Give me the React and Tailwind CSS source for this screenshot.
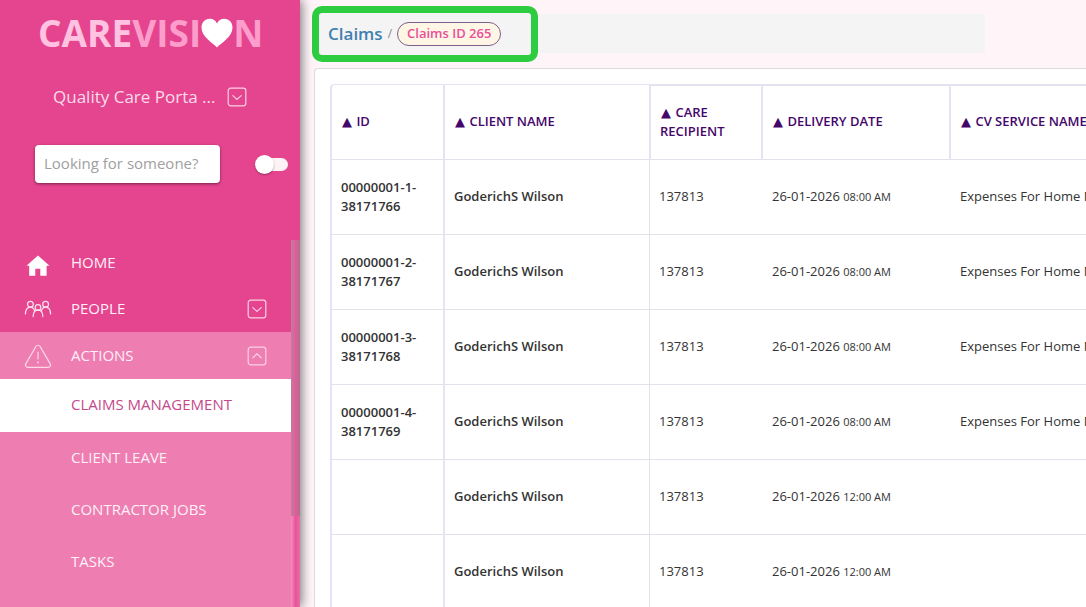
import React from "react";

const claims = [
  { id: ["00000001-1-", "38171766"], time: "08:00 AM", service: "Expenses For Home Maintenance" },
  { id: ["00000001-2-", "38171767"], time: "08:00 AM", service: "Expenses For Home Maintenance" },
  { id: ["00000001-3-", "38171768"], time: "08:00 AM", service: "Expenses For Home Maintenance" },
  { id: ["00000001-4-", "38171769"], time: "08:00 AM", service: "Expenses For Home Maintenance" },
  { id: [], time: "12:00 AM", service: "" },
  { id: [], time: "12:00 AM", service: "" },
];

const actions = ["CLIENT LEAVE", "CONTRACTOR JOBS", "TASKS"];

function BoxChevron({ up = false }) {
  return (
    <svg className="h-5 w-5 shrink-0" viewBox="0 0 20 20" fill="none" stroke="#fbd0e4" strokeLinecap="round" strokeLinejoin="round" aria-hidden="true">
      <rect x="1.2" y="1.2" width="17.6" height="17.6" rx="2.6" strokeWidth="1.2" />
      <path d={up ? "M5.8 11.8 10 7.8l4.2 4" : "M5.8 8.6 10 12.4l4.2-3.8"} strokeWidth="1.2" />
    </svg>
  );
}

function HomeIcon() {
  return (
    <svg className="h-7 w-7" viewBox="0 0 28 28" fill="#fff" aria-hidden="true">
      <path d="M14 6.500 25.500 16.800H22.600V26.700H16.300V19.700H11.300V26.700H5.200V16.800H2.500Z" />
    </svg>
  );
}

function PeopleIcon() {
  return (
    <svg className="h-7 w-7" viewBox="0 0 28 28" fill="none" stroke="#fde3ef" strokeWidth="1.200" strokeLinecap="round" aria-hidden="true">
      <circle cx="6.400" cy="9.200" r="2.900" />
      <circle cx="21.600" cy="9.200" r="2.900" />
      <circle cx="14" cy="12.400" r="2.800" />
      <path d="M1.400 19c0-4.200 2-6.900 5-6.900 2 0 3.400 1.300 4.100 3.600" />
      <path d="M26.600 19c0-4.200-2-6.900-5-6.900-2 0-3.400 1.300-4.100 3.600" />
      <path d="M9.100 21.600c.1-3.900 2-6.400 4.900-6.400s4.800 2.500 4.900 6.400" />
    </svg>
  );
}

function WarningIcon() {
  return (
    <svg className="h-7 w-7" viewBox="0 0 28 28" fill="none" stroke="#fcd9e8" strokeWidth="1.200" strokeLinecap="round" aria-hidden="true">
      <path d="M11.900 4.500c1-1.700 3.200-1.700 4.200 0l10.100 17.400c.9 1.700-.1 3.500-2.100 3.500H3.900c-2 0-3-1.800-2.100-3.500Z" />
      <path d="M14 10.200v6.800" />
      <circle cx="14" cy="20.500" r="1" fill="#fcd9e8" stroke="none" />
    </svg>
  );
}

function Logo() {
  return (
    <div className="flex h-16 items-center pl-[38px] text-[37px] font-bold leading-none">
      <span className="text-[#ffc2e0]">CARE</span>
      <span className="text-[#fc9dcb]">VISI</span>
      <svg className="h-8 w-8" viewBox="0 0 32 32" fill="#fff" aria-hidden="true">
        <path d="M16 31.500C12.500 27.500 0.500 21 0.500 11.800 0.500 6.500 4 2.800 8.600 2.800 12 2.800 14.800 4.600 16 7.400 17.200 4.600 20 2.800 23.400 2.800 28 2.800 31.500 6.500 31.500 11.800 31.500 21 19.500 27.500 16 31.500Z" />
      </svg>
      <span className="text-[#fc9dcb]">N</span>
    </div>
  );
}

function Sidebar() {
  return (
    <aside className="z-10 flex w-[300px] shrink-0 flex-col bg-[#e5458f] shadow-[2px_0_10px_rgba(0,0,0,0.5)]">
      <Logo />
      <button type="button" className="mt-[21px] flex items-center gap-3 pl-[53px] text-[17px] leading-6 text-[#fcdcea]">
        <span>Quality Care Porta ...</span>
        <BoxChevron />
      </button>
      <div className="mt-9 flex items-center justify-between pl-[35px] pr-3">
        <input
          type="text"
          aria-label="Search people"
          placeholder="Looking for someone?"
          className="h-[38px] w-[185px] rounded bg-white px-[9px] pb-[2px] text-[15px] shadow-[0_1px_3px_rgba(0,0,0,0.5)] outline-none placeholder:text-[#a0a0a0]"
        />
        <label className="relative flex h-5 w-[33px] items-center">
          <input type="checkbox" role="switch" aria-label="Include inactive" className="peer absolute inset-0 m-0 cursor-pointer appearance-none" />
          <span className="ml-1 h-[13px] w-full rounded-full bg-[#fdf3f7]" />
          <span className="pointer-events-none absolute left-0 h-[19px] w-[19px] rounded-full bg-white shadow-[0_1px_2px_rgba(0,0,0,0.35)] peer-checked:left-[14px]" />
        </label>
      </div>
      <div className="mt-[57px] flex min-h-0 flex-1">
        <nav className="flex-1 overflow-hidden text-[15px] leading-5 text-[#fff0f7]">
          <a href="#home" className="flex h-[46px] items-center pl-6">
            <HomeIcon />
            <span className="pb-[2px] pl-[19px]">HOME</span>
          </a>
          <button type="button" className="flex h-[46px] w-full items-center pl-6 pr-6">
            <PeopleIcon />
            <span className="flex-1 pb-[2px] pl-[19px] text-left">PEOPLE</span>
            <BoxChevron />
          </button>
          <div className="h-full bg-[#ee7db1]">
            <button type="button" className="flex h-[47px] w-full items-center pl-6 pr-6">
              <WarningIcon />
              <span className="flex-1 pb-[2px] pl-[19px] text-left">ACTIONS</span>
              <BoxChevron up />
            </button>
            <a href="#claims" className="flex h-[53px] items-center bg-white pb-1 pl-[71px] text-[#c4498a]">CLAIMS MANAGEMENT</a>
            {actions.map((a) => (
              <a key={a} href="#actions" className="flex h-[52px] items-center pb-[2px] pl-[71px]">{a}</a>
            ))}
          </div>
        </nav>
        <div className="w-[9px] bg-linear-to-r from-[#f58bbd] via-[#e5559a] to-[#ea6aa6]">
          <div className="h-[276px] bg-linear-to-r from-[#c27a9d] via-[#dd5f99] to-[#b56c90]" />
        </div>
      </div>
    </aside>
  );
}

const headCell = "border-b border-b-[#e2e3ea] border-l-2 border-l-[#e3e3f3] px-[9px] pb-[2px] pt-0 text-left font-semibold leading-[19px]";

function Heading({ children }) {
  return (
    <>
      <span className="px-px font-['DejaVu_Sans',sans-serif] text-[13px] font-normal leading-none">▲</span> {children}
    </>
  );
}

function ClaimsTable() {
  return (
    <table className="w-[920px] table-fixed border-separate border-spacing-0 text-[13px] leading-[19px] text-[#333]">
      <colgroup>
        <col className="w-[113px]" />
        <col className="w-[206px]" />
        <col className="w-[112px]" />
        <col className="w-[188px]" />
        <col />
      </colgroup>
      <thead className="text-[#45066b]">
        <tr className="h-[76px]">
          <th className={`${headCell} rounded-tl border-t border-t-[#e3e3f3]`}><Heading>ID</Heading></th>
          <th className={`${headCell} border-t border-t-[#e3e3f3]`}><Heading>CLIENT NAME</Heading></th>
          <th className={`${headCell} border-t-2 border-t-[#e3e3ee]`}><Heading>CARE RECIPIENT</Heading></th>
          <th className={`${headCell} border-t-2 border-t-[#e3e3ee]`}><Heading>DELIVERY DATE</Heading></th>
          <th className={`${headCell} border-t-2 border-t-[#e3e3ee]`}><Heading>CV SERVICE NAME</Heading></th>
        </tr>
      </thead>
      <tbody>
        {claims.map((c, i) => (
          <tr key={i} className="h-[75px]">
            <td className="border-b border-b-[#e2e3ea] border-l-2 border-l-[#e3e3f9] px-[9px] font-semibold">
              {c.id.map((line) => <div key={line}>{line}</div>)}
            </td>
            <td className="border-b border-b-[#e2e3ea] border-l-2 border-l-[#e6e6f0] px-[9px] pb-[2px] pt-0 font-semibold">GoderichS Wilson</td>
            <td className="border-b border-l border-[#e2e3ea] px-[9px] pb-[2px] pt-0">137813</td>
            <td className="border-b border-[#e2e3ea] px-[11px] pb-[2px] pt-0">
              26-01-2026 <span className="text-[11px]">{c.time}</span>
            </td>
            <td className="whitespace-nowrap border-b border-[#e2e3ea] px-[11px] pb-[2px] pt-0">{c.service}</td>
          </tr>
        ))}
      </tbody>
    </table>
  );
}

export default function App() {
  return (
    <div className="flex h-screen overflow-hidden bg-[#fff5f9] font-['Open_Sans','Noto_Sans',sans-serif]">
      <Sidebar />
      <main className="flex min-w-0 flex-1 flex-col overflow-hidden pl-3">
        <div className="mr-[101px] mt-[6px] flex bg-[linear-gradient(#f4f4f4,#f4f4f4)] bg-[length:100%_39px] bg-[position:0_8px] bg-no-repeat">
          <div className="flex h-14 w-[226px] items-center rounded-[10px] border-[7px] border-[#2ecc40] bg-[#f4f4f4] pl-[9px]">
            <a href="#claims" className="text-[17px] font-semibold text-[#4080b0]">Claims</a>
            <span className="px-[5px] text-xs text-[#888]">/</span>
            <span className="flex h-6 items-center rounded-full border border-[#7d5f8c] bg-[#fff6e6] px-[9px] text-[13px] font-semibold text-[#ea4f98]">Claims ID 265</span>
          </div>
        </div>
        <section className="ml-[2px] mt-[6px] flex-1 overflow-hidden rounded-tl border-l border-t border-[#dcdce0] bg-white pl-[15px] pt-[15px]">
          <ClaimsTable />
        </section>
      </main>
    </div>
  );
}
